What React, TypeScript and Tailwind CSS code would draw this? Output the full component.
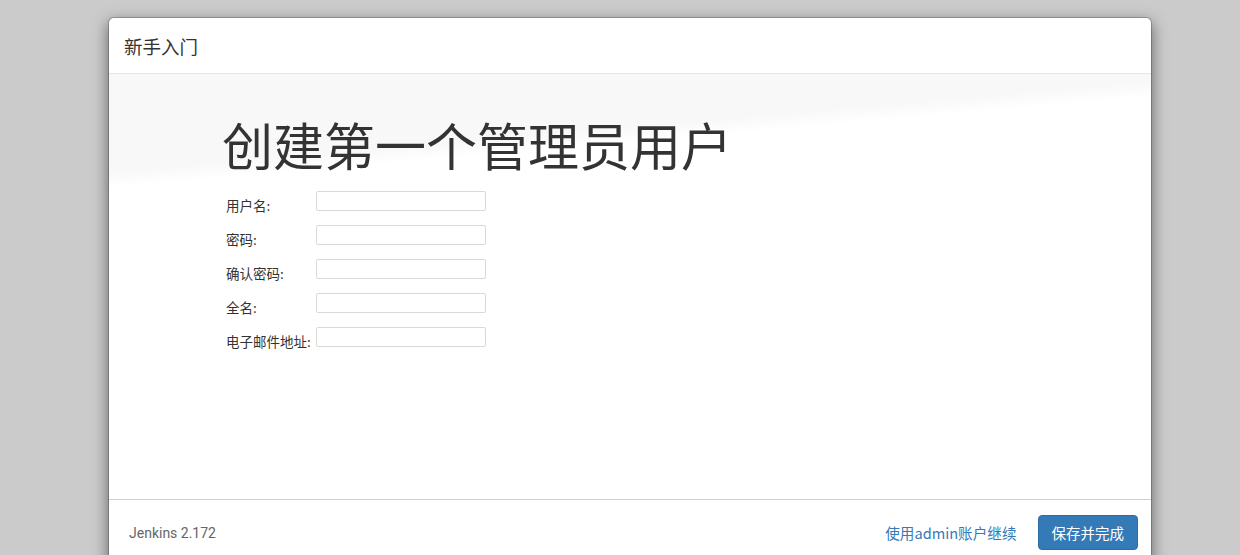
import React from 'react';

const FIELDS = ['用户名:', '密码:', '确认密码:', '全名:', '电子邮件地址:'];

const App: React.FC = () => {
  return (
    <div className="h-[555px] overflow-hidden bg-[#cbcbcb] pt-[17px] pl-[108px] font-['Roboto','Noto_Sans_CJK_SC',sans-serif] text-[#333]">
      <div className="w-[1044px] rounded-[6px] border border-black/20 bg-white bg-clip-padding shadow-[0_5px_15px_rgba(0,0,0,0.5)]">
        {/* header */}
        <div className="flex h-[56px] items-center border-b border-[#e5e5e5] px-[15px]">
          <h4 className="pt-[2px] text-[18.5px] leading-[25px] font-['Noto_Sans_CJK_SC',sans-serif]">新手入门</h4>
        </div>

        {/* body */}
        <div className="h-[425px] bg-[linear-gradient(175deg,#f8f8f8_19%,#ffffff_22%)] pl-[113px] pt-[45px]">
          <h1 className="text-[51px] leading-[50px] font-normal font-['Noto_Sans_CJK_SC',sans-serif] text-[#333]">
            创建第一个管理员用户
          </h1>
          <div className="mt-[22px] flex flex-col pl-[4px]">
            {FIELDS.map((label) => (
              <div key={label} className="flex h-[34px] items-start">
                <label className="w-[90px] shrink-0 whitespace-nowrap pt-[4px] text-[13.5px] leading-[20px] font-['Noto_Sans_CJK_SC',sans-serif] text-[#333]">
                  {label}
                </label>
                <input
                  type="text"
                  className="h-[20px] w-[170px] rounded-[2px] border border-[#d9d9d9] bg-white"
                />
              </div>
            ))}
          </div>
        </div>

        {/* footer */}
        <div className="flex h-[66px] items-start border-t border-[#d0d0d0] pl-[20px] pr-[13px] pt-[15px]">
          <span className="mt-[8px] text-[14px] leading-[20px] text-[#666] font-['Roboto',sans-serif]">Jenkins 2.172</span>
          <div className="ml-auto flex items-center gap-[21px]">
            <a href="#" className="text-[14.6px] leading-[20px] text-[#337ab7] font-['Noto_Sans_CJK_SC',sans-serif]">
              使用admin账户继续
            </a>
            <button className="h-[35px] rounded-[4px] border border-[#2e6da4] bg-[#337ab7] px-[13px] text-[14.5px] leading-[20px] text-white font-['Noto_Sans_CJK_SC',sans-serif]">
              保存并完成
            </button>
          </div>
        </div>
      </div>
    </div>
  );
};

export default App;
